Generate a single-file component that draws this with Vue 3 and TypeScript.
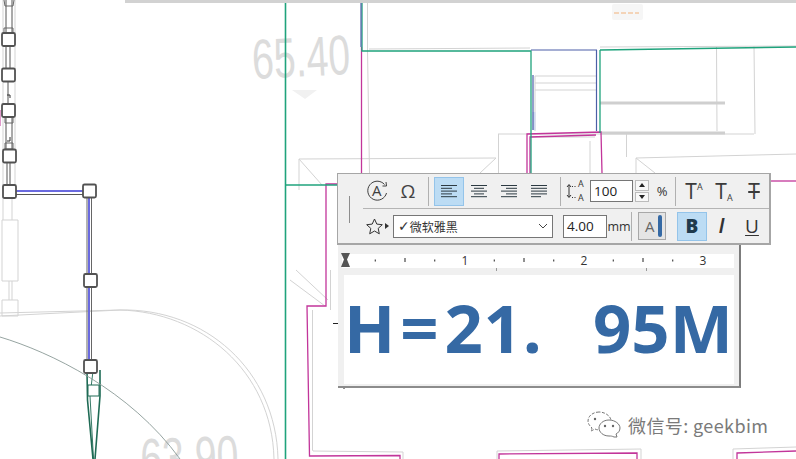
<script setup lang="ts">
const rulerTicks = Array.from({ length: 13 }, (_, i) => 345.5 + i * 29.75).filter((x) => x > 360 && x < 733);
const digits = [
  { n: '1', x: 465 },
  { n: '2', x: 584 },
  { n: '3', x: 703 },
];
const aligns = [
  { key: 'left', active: true, lines: [[2, 18], [2, 13], [2, 18], [2, 13], [2, 18]] },
  { key: 'center', active: false, lines: [[2, 18], [5, 15], [2, 18], [5, 15], [2, 18]] },
  { key: 'right', active: false, lines: [[2, 18], [7, 18], [2, 18], [7, 18], [2, 18]] },
  { key: 'justify', active: false, lines: [[2, 18], [2, 18], [2, 18], [2, 18], [2, 12]] },
];
</script>

<template>
  <div class="page">
    <svg class="drawing" width="796" height="459" viewBox="0 0 796 459" fill="none">
      <rect x="125" y="0" width="671" height="3" fill="#d2d2d2" />
      <rect x="612" y="4" width="31" height="16" rx="2" fill="#f6f6f6" />
      <path d="M614 13h25" stroke="#f2b27a" stroke-dasharray="5 2" />

      <!-- elevation labels -->
      <text x="0" y="0" class="level" transform="translate(253 79) rotate(-3) scale(.7 1)">65.40</text>
      <text x="0" y="0" class="level" transform="translate(141 478) rotate(-2) scale(.7 1)">63.90</text>
      <path d="M292 90h25l-12 9z" fill="#f1f1f1" />

      <!-- light grey walls -->
      <g stroke="#d3d3d3" stroke-width="1">
        <path d="M367.500 3V50L369.500 173" />
        <path d="M369 49L530 48M600 47L796 46" />
        <path d="M535 76H597M535 83H597M535 90H597M535 76V131" />
        <path d="M716.500 47L717 131M754 46L755 134M498 134H754M498.500 134V173M626.500 134V157" />
        <path d="M299 159L496 158M299 159L322 185M496 158L480 173M299 159V190" />
        <path d="M636 158L796 154M636 158L655 173M636 158V173" />
        <path d="M590 141V173M530 137H595" />
        <path d="M290 280L325 306M296 270L328 300M330.500 270V310M312.500 310V450L313 451L403 452V459" />
        <path d="M497 459V451L641 449V459M733 459V449L796 447" />
        <path d="M3 0V190M15 0V190M3 197V220M12 197V220" />
        <path d="M2 220H18V281H2ZM9 281V300M12 281V300M2 300H18V316H2Z" />
        <path d="M0 316L120 310C200 312 272 370 274 459" />
        <path d="M0 313L120 310C205 308 276 370 278 459" />
      </g>
      <g stroke="#cfcfcf" stroke-width="3">
        <path d="M600 103H725M600 133H725" />
      </g>
      <path d="M534 112V130" stroke="#cfd9f0" stroke-width="3" />

      <!-- magenta walls -->
      <g stroke="#c2359a" stroke-width="1.300">
        <path d="M361.500 47V173" />
        <path d="M527 173V134L601 132L602 173M530 173V137L596 135" />
        <path d="M337 184H326V306H307L309.500 456L400 455.500V459" />
        <path d="M499 459V454L637 453V459M737 459V453L796 451" />
        <path d="M770 181H796" />
        <path d="M0 110V126" stroke-width="2" opacity=".5" />
      </g>

      <!-- teal and blue lines -->
      <g stroke="#1fa37c" stroke-width="1.300">
        <path d="M285.500 3V459" stroke-width="1.600" />
        <path d="M285 185H337" />
        <path d="M362 3V51H531L531 173" />
        <path d="M600 50L796 47M600 50V133" />
      </g>
      <g stroke="#4c5fa8" stroke-width="1.200">
        <path d="M361 3V47M531 50H597M596.500 50V131M533 75V130" />
      </g>

      <!-- selected wall run -->
      <path d="M15 191H84" stroke="#6a6adf" stroke-width="2" />
      <path d="M15 194.500H84" stroke="#555" stroke-width="1" />
      <path d="M89 197V366" stroke="#6a6adf" stroke-width="2" />
      <path d="M87 197V366M91.500 197V366" stroke="#666" stroke-width="1" />
      <path d="M6 0V33M12 0V33M6 46V68M10 46V68M8 82V104M6 118V150M12 118V150M7 163V185M10 163V185" stroke="#555" stroke-width="1" />
      <path d="M4 28H13V33H4ZM5 117H13V123H5ZM5 143H13V149H5ZM4 0L5 6H13L14 0" stroke="#666" />

      <!-- cone -->
      <path d="M87 371L87.500 400L93 459M100 370V396L95 459" stroke="#1f6b55" stroke-width="1.600" />
      <path d="M93 371L90 396L93.500 459" stroke="#1f6b55" stroke-width=".9" />
      <rect x="88" y="385" width="11" height="11" stroke="#1f6b55" fill="#fff" />
      <path d="M0 337C50 352 130 390 180 459" stroke="#8a9a96" stroke-width=".9" />

      <!-- grips -->
      <g fill="#fff" stroke="#525252" stroke-width="1.800">
        <rect x="2" y="33" width="13" height="13" rx="1.500" />
        <rect x="2" y="68.500" width="13" height="13" rx="1.500" />
        <rect x="2" y="104" width="13" height="13" rx="1.500" />
        <rect x="3" y="149.500" width="13" height="13" rx="1.500" />
        <rect x="3" y="185" width="13" height="13" rx="1.500" />
        <rect x="83" y="184.500" width="13" height="13" rx="1.500" />
        <rect x="84" y="274" width="13" height="13" rx="1.500" />
        <rect x="84" y="360" width="13" height="13" rx="1.500" />
      </g>
      <path d="M7 95H10V98M10 137V141H7" stroke="#333" />
      <path d="M333 323.500H338M344 388V389" stroke="#222" />
    </svg>

    <div class="editor">
      <svg class="ruler" width="403" height="32" viewBox="338 243 403 32">
        <rect x="342" y="254" width="392" height="14" fill="#fff" />
        <path d="M341 253H350L347 259.500L350 267H341L344 259.500Z" fill="#555" />
        <g v-for="(x, i) in rulerTicks" :key="x">
          <path v-if="i % 2 === 0" :d="`M${x} 259.500v2`" stroke="#222" />
          <path v-else-if="i % 4 === 1" :d="`M${x} 258v4`" stroke="#222" />
        </g>
        <text v-for="d in digits" :key="d.n" :x="d.x" y="265" class="ruler-digit">{{ d.n }}</text>
        <path d="M496.500 268v3M646.500 268v3" stroke="#999" />
      </svg>
      <div class="text-area">
        <span class="big-text">H<span class="eq">=</span><span class="num">21.</span><span class="tail">&nbsp;&nbsp;&nbsp;95M</span></span>
      </div>
    </div>

    <div class="toolbar">
      <div class="grip"><span class="grip-line"></span></div>
      <div class="rows">
        <div class="row row-top">
          <span class="tool">
            <svg width="24" height="24" viewBox="0 0 24 24" fill="none" stroke="#3f3f3f">
              <path d="M18.500 5.500A9.500 9.500 0 1 0 20.500 14" />
              <path d="M16.500 7L20.500 7L20 3" />
              <text x="6" y="17" class="glyph-a">A</text>
            </svg>
          </span>
          <span class="tool omega">Ω</span>
          <i class="sep"></i>
          <span v-for="a in aligns" :key="a.key" class="tool align" :class="{ active: a.active }">
            <svg width="20" height="16" viewBox="0 0 20 16" stroke="#2c3a42">
              <path v-for="(l, i) in a.lines" :key="i" :d="`M${l[0]} ${2.5 + i * 2.8}H${l[1]}`" />
            </svg>
          </span>
          <i class="sep sep-b"></i>
          <span class="spacing">
            <svg width="22" height="26" viewBox="0 0 22 26" fill="none" stroke="#333">
              <path d="M4 7V19M2 9L4 6.500L6 9M2 17L4 19.500L6 17" />
              <path d="M7 8.500H12M7 19.500H12" stroke-dasharray="1 1.500" />
              <text x="13" y="9" class="glyph-s">A</text>
              <text x="13" y="23" class="glyph-s">A</text>
            </svg>
          </span>
          <span class="field field-pct">100</span>
          <span class="spin">
            <b class="spin-up"></b>
            <b class="spin-down"></b>
          </span>
          <span class="unit pct">%</span>
          <i class="sep sep-c"></i>
          <span class="tool type-t">T<sup>A</sup></span>
          <span class="tool type-t">T<sub>A</sub></span>
          <span class="tool type-t strike">T</span>
        </div>
        <div class="row row-bottom">
          <svg class="star" width="19" height="18" viewBox="0 0 19 18" fill="none" stroke="#333">
            <path d="M9.500 2L11.800 7.100L17.300 7.700L13.200 11.400L14.300 16.800L9.500 14L4.700 16.800L5.800 11.400L1.700 7.700L7.200 7.100Z" />
          </svg>
          <span class="arrow"></span>
          <span class="select">
            <span class="check">✓</span><span class="font-name">微软雅黑</span>
            <svg class="chev" width="10" height="6" viewBox="0 0 10 6" fill="none" stroke="#444">
              <path d="M1 1L5 5L9 1" />
            </svg>
          </span>
          <span class="field field-size">4.00</span>
          <span class="unit mm">mm</span>
          <i class="sep sep-d"></i>
          <span class="color-btn">A<b class="swatch"></b></span>
          <i class="sep sep-e"></i>
          <span class="tool style-b active">B</span>
          <span class="tool style-i">/</span>
          <span class="tool style-u">U</span>
        </div>
      </div>
    </div>

    <div class="watermark">
      <svg width="34" height="27" viewBox="0 0 34 27" fill="#fff" stroke="#777" stroke-width="1">
        <path d="M12 1C6 1 1 5 1 10C1 13 3 15 5 17L4 20L8 18C10 19 12 19 14 19C20 19 24 15 24 10C24 5 18 1 12 1Z" stroke-dasharray="3 1.500" />
        <path d="M22 9C16 9 12 13 12 17C12 21 16 25 22 25C24 25 25 25 27 26L30 26L29 23C31 22 33 20 33 17C33 13 28 9 22 9Z" />
        <circle cx="18" cy="15" r="1.200" fill="#666" stroke="none" />
        <circle cx="26" cy="15" r="1.200" fill="#666" stroke="none" />
        <circle cx="8" cy="8" r="1.200" fill="#666" stroke="none" />
      </svg>
      <span class="wm-text">微信号: geekbim</span>
    </div>
  </div>
</template>

<style scoped>
.page {
  position: relative;
  width: 796px;
  height: 459px;
  overflow: hidden;
  background: #fff;
  font-family: "Open Sans", "Noto Sans CJK SC", sans-serif;
}
.drawing {
  position: absolute;
  left: 0;
  top: 0;
}
.level {
  font-family: "Liberation Sans", sans-serif;
  font-size: 56px;
  fill: #dcdcdc;
}
.editor {
  position: absolute;
  left: 338px;
  top: 243px;
  width: 401px;
  height: 143px;
  background: #f0f0f0;
  border-right: 2px solid #7c7c7c;
  border-bottom: 2px solid #8c8c8c;
  display: flex;
  flex-direction: column;
}
.ruler {
  display: block;
  flex: none;
}
.ruler-digit {
  font-size: 12px;
  fill: #333;
  text-anchor: middle;
}
.text-area {
  margin: 0 5px 2px 6px;
  flex: 1;
  background: #fff;
  display: flex;
  align-items: center;
  padding: 0 0 6px 0;
  overflow: hidden;
}
.big-text {
  font-family: "Open Sans", sans-serif;
  font-weight: 700;
  font-size: 67px;
  line-height: 92px;
  letter-spacing: 0.9px;
  color: #3569a4;
  white-space: nowrap;
}
.eq {
  margin-left: 4px;
}
.num {
  margin-left: 5px;
}
.tail {
  margin-left: -2px;
  letter-spacing: 0;
}
.toolbar {
  position: absolute;
  left: 337px;
  top: 173px;
  width: 431px;
  height: 69px;
  display: flex;
  background: #f0f0f0;
  border: 1px solid #a6a6a6;
  border-width: 1px 2px 2px 1px;
  color: #333;
}
.grip {
  box-sizing: border-box;
  width: 25px;
  flex: none;
  display: flex;
  align-items: flex-end;
  padding-left: 11px;
  padding-bottom: 20px;
}
.grip-line {
  width: 1px;
  height: 27px;
  background: #8d8d8d;
}
.rows {
  flex: 1;
  display: flex;
  flex-direction: column;
}
.row {
  display: flex;
  align-items: center;
}
.row-top {
  height: 34px;
  border-bottom: 1px solid #b4b4b4;
}
.row-bottom {
  flex: 1;
}
.tool {
  width: 30px;
  height: 29px;
  flex: none;
  display: flex;
  align-items: center;
  justify-content: center;
  box-sizing: border-box;
  border: 1px solid transparent;
}
.tool.active {
  background: #bcdcf4;
  border-color: #94c4ea;
}
.glyph-a {
  font-family: "Open Sans", sans-serif;
  font-size: 15px;
  fill: #3f3f3f;
  stroke: none;
}
.glyph-s {
  font-family: "Open Sans", sans-serif;
  font-size: 9px;
  fill: #333;
  stroke: none;
}
.omega {
  font-family: "Open Sans", sans-serif;
  font-size: 19px;
  color: #444;
}
.sep {
  width: 1px;
  height: 29px;
  background: #b0b0b0;
  flex: none;
  margin: 0 5px;
}
.sep-b {
  margin: 0 4px 0 6px;
}
.spacing {
  width: 22px;
  height: 26px;
  flex: none;
  margin-right: 3px;
}
.field {
  box-sizing: border-box;
  background: #fff;
  border: 1px solid #767676;
  flex: none;
  display: flex;
  align-items: center;
  font-size: 13.500px;
  color: #222;
  padding-left: 3px;
}
.field-pct {
  width: 43px;
  height: 22px;
}
.spin {
  width: 14px;
  height: 22px;
  flex: none;
  margin-left: 2px;
  display: flex;
  flex-direction: column;
  gap: 1px;
}
.spin b {
  flex: 1;
  background: #f8f8f8;
  border: 1px solid #bcbcbc;
  display: flex;
  align-items: center;
  justify-content: center;
}
.spin-up::before,
.spin-down::before {
  content: "";
  border-left: 3px solid transparent;
  border-right: 3px solid transparent;
}
.spin-up::before {
  border-bottom: 4px solid #222;
}
.spin-down::before {
  border-top: 4px solid #222;
}
.unit {
  font-size: 13px;
  color: #333;
  flex: none;
}
.pct {
  width: 22px;
  text-align: center;
  margin-left: 2px;
}
.sep-c {
  margin: 0 3px 0 2px;
}
.type-t {
  font-family: "Open Sans", sans-serif;
  font-size: 21px;
  color: #3a3a3a;
  position: relative;
  width: 30px;
}
.type-t sup,
.type-t sub {
  font-size: 9px;
  line-height: 1;
  align-self: center;
}
.type-t sup {
  margin-bottom: 10px;
}
.type-t sub {
  margin-top: 12px;
}
.strike {
  text-decoration: line-through;
  text-decoration-thickness: 2px;
}
.star {
  margin-left: 2px;
  flex: none;
}
.arrow {
  width: 0;
  height: 0;
  border-left: 4px solid #333;
  border-top: 3.500px solid transparent;
  border-bottom: 3.500px solid transparent;
  margin: 0 4px 0 1px;
  flex: none;
}
.select {
  box-sizing: border-box;
  width: 160px;
  height: 23px;
  flex: none;
  background: #fff;
  border: 1px solid #767676;
  display: flex;
  align-items: center;
  padding-left: 4px;
  position: relative;
}
.check {
  font-family: "DejaVu Sans", sans-serif;
  font-weight: 700;
  font-size: 14px;
  color: #333;
}
.font-name {
  font-family: "Noto Sans CJK SC", sans-serif;
  font-size: 12px;
  color: #333;
}
.chev {
  margin-left: auto;
  margin-right: 4px;
}
.field-size {
  width: 44px;
  height: 23px;
  margin-left: 10px;
}
.mm {
  width: 24px;
  text-align: center;
  font-size: 12.500px;
  white-space: nowrap;
}
.sep-d {
  margin: 0 6px 0 0;
}
.color-btn {
  box-sizing: border-box;
  width: 28px;
  height: 28px;
  flex: none;
  background: #e4e4e4;
  border: 1px solid #a8a8a8;
  display: flex;
  align-items: center;
  justify-content: space-between;
  padding: 0 3px 0 6px;
  font-size: 15px;
  color: #666;
}
.swatch {
  width: 4px;
  height: 22px;
  border-radius: 2px;
  background: #3569a4;
}
.sep-e {
  margin: 0 5px 0 6px;
  height: 0;
  width: 0;
  background: none;
}
.style-b {
  font-family: "Open Sans", sans-serif;
  font-weight: 800;
  font-size: 19px;
  color: #1f3a4d;
}
.style-i {
  font-family: "Liberation Sans", sans-serif;
  font-size: 21px;
  font-weight: 700;
  color: #333;
}
.style-u {
  font-family: "Open Sans", sans-serif;
  font-size: 19px;
  color: #333;
  text-decoration: underline;
  text-underline-offset: 2px;
}
.watermark {
  position: absolute;
  left: 587px;
  top: 411px;
  display: flex;
  align-items: center;
  gap: 7px;
}
.wm-text {
  font-family: "Noto Sans CJK SC", sans-serif;
  font-size: 18px;
  line-height: 26px;
  letter-spacing: 0.4px;
  color: #7a7a7a;
  white-space: nowrap;
}
</style>
